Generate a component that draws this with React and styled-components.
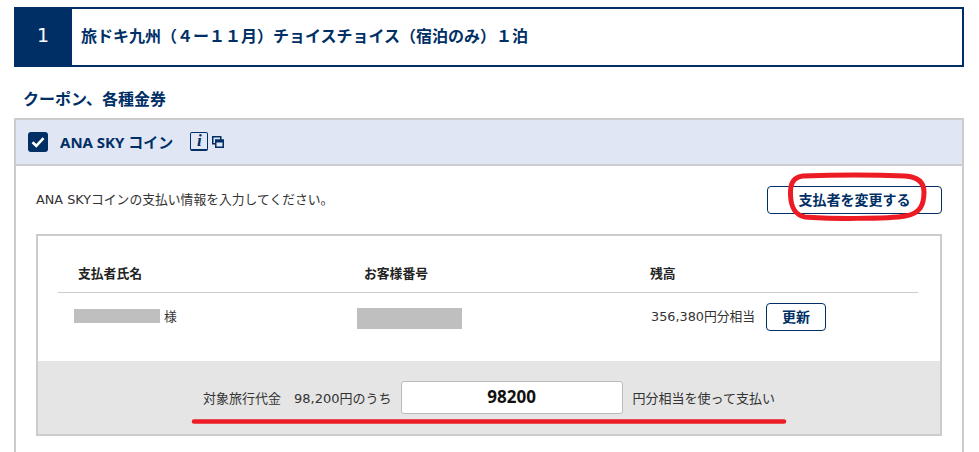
import React from "react";
import styled, { createGlobalStyle } from "styled-components";

const navy = "#002f66";

const GlobalStyle = createGlobalStyle`
  html, body {
    background: #fff;
    margin: 0;
    overflow: hidden;
  }

  body {
    color: #333;
    font-family: "DejaVu Sans", "Noto Sans CJK JP", sans-serif;
    font-size: 12.8px;
  }
`;

const Page = styled.div`
  height: 452px;
  overflow: hidden;
  padding: 7px 15px 0 14px;
  position: relative;
  width: 979px;
  box-sizing: border-box;
`;

const PlanHeader = styled.div`
  border: 2px solid ${navy};
  box-sizing: border-box;
  display: flex;
  height: 60px;
`;

const PlanNumber = styled.div`
  align-items: center;
  background: ${navy};
  box-sizing: border-box;
  color: #fff;
  display: flex;
  flex: 0 0 56px;
  font-size: 19px;
  justify-content: center;
  padding: 0 2px 4px 0;
`;

const PlanTitle = styled.div`
  align-items: center;
  color: ${navy};
  display: flex;
  font-size: 16px;
  font-weight: 700;
  padding: 0 0 4px 9px;
`;

const SectionTitle = styled.h2`
  color: ${navy};
  font-size: 16px;
  font-weight: 700;
  line-height: 22px;
  margin: 22px 0 7px 9px;
`;

const Panel = styled.section`
  border: 2px solid #ccc;
  border-bottom: 0;
`;

const PanelHead = styled.div`
  align-items: center;
  background: #e1e6f5;
  border-bottom: 2px solid #ccc;
  display: flex;
  height: 44px;
  padding-left: 12px;
`;

const Check = styled.span`
  align-items: center;
  background: ${navy};
  border-radius: 3px;
  display: flex;
  height: 20px;
  justify-content: center;
  width: 20px;
`;

const CoinName = styled.span`
  color: ${navy};
  font-family: "Noto Sans", "Noto Sans CJK JP", sans-serif;
  font-size: 15px;
  font-weight: 700;
  margin-left: 12px;
  padding-bottom: 2px;
`;

const InfoIcon = styled.span`
  align-items: center;
  border: 1px solid ${navy};
  border-bottom-width: 2px;
  border-radius: 2px;
  box-sizing: border-box;
  color: ${navy};
  display: flex;
  font-family: "Liberation Serif", serif;
  font-size: 17px;
  font-style: italic;
  font-weight: 700;
  height: 19px;
  justify-content: center;
  margin: -2px 4px 0 17px;
  width: 18px;
`;

const PanelBody = styled.div`
  padding: 20px 20px 30px;
`;

const IntroRow = styled.div`
  align-items: center;
  display: flex;
  justify-content: space-between;
  margin-bottom: 20px;
`;

const IntroText = styled.span`
  padding-bottom: 4px;
`;

const OutlineButton = styled.button`
  background: #fff;
  border: 1px solid ${navy};
  border-radius: 4px;
  box-sizing: border-box;
  color: ${navy};
  font-family: inherit;
  font-size: 14px;
  font-weight: 700;
  height: 28px;
  padding: 0 0 2px;
  width: ${(p) => p.$width}px;
`;

const PayerBox = styled.div`
  border: 2px solid #ccc;
`;

const PayerTable = styled.div`
  box-sizing: border-box;
  height: 125px;
  padding: 20px 22px 0 20px;
`;

const Row = styled.div`
  display: grid;
  grid-template-columns: 286px 286px 1fr;
`;

const HeadRow = styled(Row)`
  align-items: center;
  border-bottom: 1px solid #ccc;
  height: 36px;
`;

const HeadCell = styled.div`
  color: #222;
  font-weight: 700;
  padding: 0 0 4px 20px;
`;

const ValueCell = styled.div`
  align-items: center;
  box-sizing: border-box;
  display: flex;
  height: 46px;
  padding: 2px 0 0 ${(p) => p.$indent}px;
`;

const Masked = styled.span`
  background: #bfbfbf;
  display: block;
  height: ${(p) => p.$h}px;
  margin-top: ${(p) => p.$shift}px;
  width: ${(p) => p.$w}px;
`;

const Honorific = styled.span`
  margin-left: 4px;
  padding-bottom: 4px;
`;

const Balance = styled.span`
  margin-right: 11px;
  padding-bottom: 4px;
`;

const AmountBar = styled.div`
  align-items: center;
  background: #e5e5e5;
  display: flex;
  font-size: 13px;
  gap: 10px;
  height: 73px;
  justify-content: center;
`;

const AmountInput = styled.div`
  background: #fff;
  border: 1px solid #bbb;
  border-radius: 3px;
  box-sizing: border-box;
  color: #111;
  font-family: "Noto Sans", sans-serif;
  font-size: 17px;
  font-weight: 700;
  height: 33px;
  line-height: 30px;
  margin-left: -1px;
  text-align: center;
  width: 222px;
`;

const Gap = styled.span`
  margin-left: 13px;
`;

const Markup = styled.svg`
  height: 452px;
  left: 0;
  pointer-events: none;
  position: absolute;
  top: 0;
  width: 979px;
`;

const App = () => (
  <Page>
    <GlobalStyle />
    <PlanHeader>
      <PlanNumber>1</PlanNumber>
      <PlanTitle>旅ドキ九州（４ー１１月）チョイスチョイス（宿泊のみ）１泊</PlanTitle>
    </PlanHeader>
    <SectionTitle>クーポン、各種金券</SectionTitle>
    <Panel>
      <PanelHead>
        <Check>
          <svg width="14" height="12" viewBox="0 0 14 12">
            <path d="M1.5 6.2l3.8 3.6L12.5 2.2" fill="none" stroke="#fff" strokeWidth="2.6" />
          </svg>
        </Check>
        <CoinName>ANA SKY コイン</CoinName>
        <InfoIcon>i</InfoIcon>
        <svg width="12" height="12" viewBox="0 0 12 12">
          <rect x=".75" y=".75" width="8" height="7" fill="none" stroke={navy} strokeWidth="1.5" />
          <rect x="3.75" y="4.25" width="7.5" height="7" fill="#e1e6f5" stroke={navy} strokeWidth="1.5" />
          <rect x="3" y="3.5" width="9" height="3" fill={navy} />
        </svg>
      </PanelHead>
      <PanelBody>
        <IntroRow>
          <IntroText>ANA SKYコインの支払い情報を入力してください。</IntroText>
          <OutlineButton $width={175}>支払者を変更する</OutlineButton>
        </IntroRow>
        <PayerBox>
          <PayerTable>
            <HeadRow>
              <HeadCell>支払者氏名</HeadCell>
              <HeadCell>お客様番号</HeadCell>
              <HeadCell>残高</HeadCell>
            </HeadRow>
            <Row>
              <ValueCell $indent={16}>
                <Masked $w={86} $h={14} $shift={-2} />
                <Honorific>様</Honorific>
              </ValueCell>
              <ValueCell $indent={13}>
                <Masked $w={105} $h={21} $shift={3} />
              </ValueCell>
              <ValueCell $indent={21}>
                <Balance>356,380円分相当</Balance>
                <OutlineButton $width={60}>更新</OutlineButton>
              </ValueCell>
            </Row>
          </PayerTable>
          <AmountBar>
            <span>
              対象旅行代金<Gap>98,200円のうち</Gap>
            </span>
            <AmountInput>98200</AmountInput>
            <span>円分相当を使って支払い</span>
          </AmountBar>
        </PayerBox>
      </PanelBody>
    </Panel>
    <Markup viewBox="0 0 979 452">
      <path
        d="M803 176C830 175 880 175 905 176C920 177 924 184 924 192C924 205 920 214 905 216C890 219 825 219 805 217C795 215 791 208 790.5 195C790 184 793 177 803 176Z"
        fill="none"
        stroke="#ed1c24"
        strokeWidth="5"
      />
      <line x1="194" y1="421.5" x2="784" y2="421.5" stroke="#ed1c24" strokeWidth="4.5" strokeLinecap="round" />
    </Markup>
  </Page>
);

export default App;
